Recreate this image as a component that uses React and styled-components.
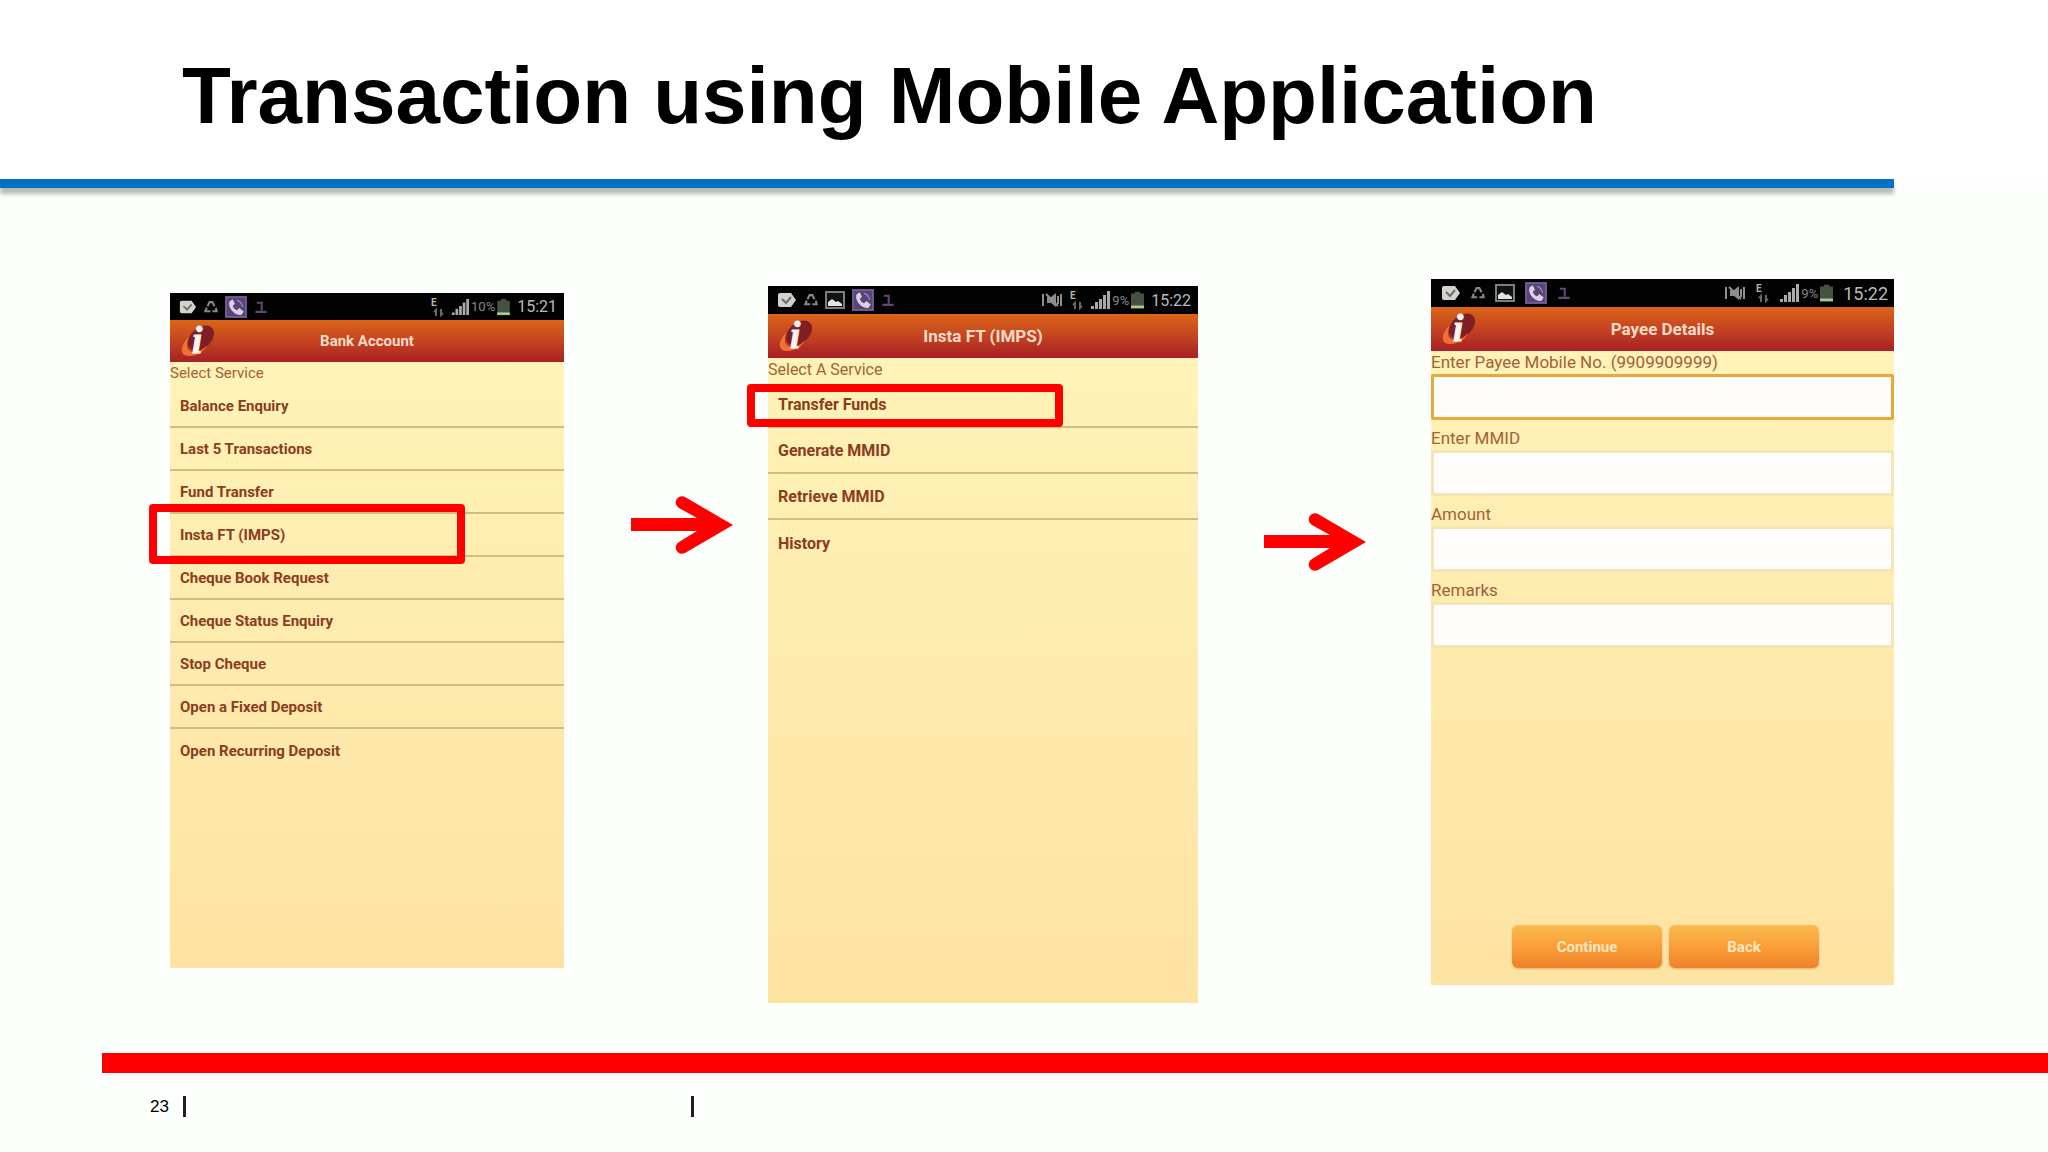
import React from "react";
import styled, { createGlobalStyle } from "styled-components";

const accountServices = [
  "Balance Enquiry",
  "Last 5 Transactions",
  "Fund Transfer",
  "Insta FT (IMPS)",
  "Cheque Book Request",
  "Cheque Status Enquiry",
  "Stop Cheque",
  "Open a Fixed Deposit",
  "Open Recurring Deposit",
];

const impsServices = [
  "Transfer Funds",
  "Generate MMID",
  "Retrieve MMID",
  "History",
];

const payeeFields = [
  { id: "mobile", label: "Enter Payee Mobile No. (9909909999)", active: true },
  { id: "mmid", label: "Enter MMID" },
  { id: "amount", label: "Amount" },
  { id: "remarks", label: "Remarks" },
];

function TagIcon({ size }) {
  return (
    <svg width={size} height={size} viewBox="0 0 20 20">
      <path d="M3 3h11l5 7-5 7H3q-2 0-2-2V5q0-2 2-2z" fill="#d2d4cd" />
      <path d="M5 9l4 4 5-6" fill="none" stroke="#6d7067" strokeWidth="2" />
    </svg>
  );
}

function RecycleIcon({ size }) {
  return (
    <svg width={size} height={size} viewBox="0 0 20 20">
      <path
        d="M5 9l3-6h4l3 6M17 11l1 5h-6M9 16H2l2-5"
        fill="none"
        stroke="#858984"
        strokeWidth="3"
      />
    </svg>
  );
}

function ImageIcon({ size }) {
  return (
    <svg width={size} height={size} viewBox="0 0 20 20">
      <rect x="1" y="2" width="18" height="16" fill="#10130f" stroke="#7b807b" strokeWidth="2" />
      <path d="M3 16v-4l4-3 4 3 2-1 4 3v2z" fill="#dce5df" />
    </svg>
  );
}

function CallIcon({ size }) {
  return (
    <svg width={size} height={size} viewBox="0 0 20 20">
      <rect x="0" y="0" width="20" height="20" fill="#594379" />
      <rect x="1" y="1" width="18" height="18" fill="none" stroke="#7f6c9c" />
      <path
        d="M4 5l3-2 2 4-2 2q1 3 4 4l2-2 4 3-2 3q-5 1-9-4-3-4-2-8z"
        fill="#dccfe6"
      />
      <path d="M11 4q4 1 5 6" fill="none" stroke="#a995bd" />
    </svg>
  );
}

function PersonIcon({ size }) {
  return (
    <svg width={size} height={size} viewBox="0 0 20 20">
      <path
        d="M4 4h7v11M2 17h16"
        fill="none"
        stroke="#664677"
        strokeWidth="3"
      />
    </svg>
  );
}

function MuteIcon({ size }) {
  return (
    <svg width={size} height={size} viewBox="0 0 20 20">
      <path d="M5 7h4l5-4v14l-5-4H5z" fill="#8b8d8b" />
      <path
        d="M1 4v12M19 4v12M16 6v8M4 4l12 12"
        fill="none"
        stroke="#8e908e"
        strokeWidth="2"
      />
    </svg>
  );
}

function DataIcon() {
  return (
    <svg width="14" height="20" viewBox="0 0 14 20">
      <text x="1" y="9" fill="#b4b6b4" fontSize="10" fontWeight="700" fontFamily="Roboto, sans-serif">
        E
      </text>
      <path
        d="M6 19v-6l-2 2M11 12v6l2-2"
        fill="none"
        stroke="#666966"
        strokeWidth="2"
      />
    </svg>
  );
}

function SignalIcon({ size }) {
  return (
    <svg width={size} height={size} viewBox="0 0 20 20">
      <path
        d="M1 19v-3h3v3zM5 19v-7h3v7zM9 19V9h3v10zM13 19V5h3v14zM17 19V1h3v18z"
        fill="#a9aba9"
      />
    </svg>
  );
}

function BatteryIcon({ size }) {
  return (
    <svg width="13" height={size} viewBox="3 0 14 20">
      <path d="M7 1h6v2h4v16H3V3h4z" fill="#45523f" />
      <path d="M3 16h14v3H3z" fill="#a9cb8d" />
    </svg>
  );
}

function BankLogo() {
  return (
    <Logo viewBox="0 0 36 32" role="img" aria-label="Bank logo">
      <ellipse cx="21" cy="13" rx="15" ry="10" transform="rotate(-42 21 13)" fill="#7e1f26" />
      <path
        d="M9 12C0 20-1 31 9 31c8 0 15-4 18-11-4 5-9 8-14 7-6-1-8-7-4-15z"
        fill="#ef7136"
      />
      <text
        x="12"
        y="28"
        fill="#fff3ee"
        stroke="#fff3ee"
        fontSize="37"
        fontWeight="700"
        fontStyle="italic"
        fontFamily="Liberation Serif, serif"
      >
        i
      </text>
    </Logo>
  );
}

function FlowArrow() {
  return (
    <svg width="102" height="58" viewBox="0 0 102 58" aria-hidden="true">
      <path
        d="M0 22h66L48 12a6 6 0 0 1 6-11l48 28-48 28a6 6 0 0 1-6-11l18-11H0z"
        fill="#ff0000"
      />
    </svg>
  );
}

function PhoneTop({ title, time, battery, large, wide, gallery, mute }) {
  const icon = large ? 20 : 18;
  return (
    <>
      <StatusBar $large={large} $wide={wide}>
        <StatusGroup $wide={wide}>
          <TagIcon size={icon} />
          <RecycleIcon size={14} />
          {gallery && <ImageIcon size={icon} />}
          <CallIcon size={22} />
          <PersonIcon size={14} />
        </StatusGroup>
        <StatusGroup $wide={wide}>
          {mute && <MuteIcon size={icon} />}
          <DataIcon />
          <Meter>
            <SignalIcon size={icon} />
            <Charge>{battery}</Charge>
            <BatteryIcon size={icon} />
          </Meter>
          <Clock $wide={wide}>{time}</Clock>
        </StatusGroup>
      </StatusBar>
      <AppBar $large={large}>
        <BankLogo />
        <AppTitle $large={large}>{title}</AppTitle>
      </AppBar>
    </>
  );
}

function ServiceList({ items, selected, large }) {
  return (
    <List>
      {items.map((item) => (
        <Service key={item} $large={large}>
          <ServiceLink href="#" $large={large}>
            {item}
          </ServiceLink>
          {item === selected && <Highlight $large={large} />}
        </Service>
      ))}
    </List>
  );
}

function App() {
  return (
    <Slide>
      <GlobalStyle />
      <Header>
        <Title>Transaction using Mobile Application</Title>
      </Header>
      <HeaderRule />
      <Flow>
        <Phone $top={14} $height={675}>
          <PhoneTop title="Bank Account" time="15:21" battery="10%" />
          <Prompt>Select Service</Prompt>
          <ServiceList items={accountServices} selected="Insta FT (IMPS)" />
        </Phone>
        <ArrowSlot $top={217} $indent={32}>
          <FlowArrow />
        </ArrowSlot>
        <Phone $top={7} $height={717}>
          <PhoneTop title="Insta FT (IMPS)" time="15:22" battery="9%" large gallery mute />
          <Prompt $large>Select A Service</Prompt>
          <ServiceList items={impsServices} selected="Transfer Funds" large />
        </Phone>
        <ArrowSlot $top={234} $indent={0}>
          <FlowArrow />
        </ArrowSlot>
        <Phone $top={0} $height={706}>
          <PhoneTop title="Payee Details" time="15:22" battery="9%" large wide gallery mute />
          <Form onSubmit={(e) => e.preventDefault()}>
            {payeeFields.map((field) => (
              <Field key={field.id}>
                <Label htmlFor={field.id}>{field.label}</Label>
                <Input id={field.id} type="text" $active={field.active} />
              </Field>
            ))}
            <Actions>
              <ActionButton type="submit">Continue</ActionButton>
              <ActionButton type="button">Back</ActionButton>
            </Actions>
          </Form>
        </Phone>
      </Flow>
      <Footer>
        <FooterBar />
        <FooterInfo>
          <PageNumber>23</PageNumber>
          <Divider />
          <FooterText />
          <Divider />
        </FooterInfo>
      </Footer>
    </Slide>
  );
}

const GlobalStyle = createGlobalStyle`
  * {
    box-sizing: border-box;
  }
  body {
    margin: 0;
    background-color: #fdfffc;
    font-family: Roboto, sans-serif;
  }
`;

const Slide = styled.main`
  min-height: 100vh;
  display: flex;
  flex-direction: column;
`;

const Header = styled.header`
  padding: 50px 0 37px 182px;
  background-color: white;
`;

const HeaderRule = styled.div`
  height: 9px;
  margin-right: 154px;
  background-color: #0070c4;
  box-shadow: 0 6px 4px rgba(0, 0, 0, 0.28);
`;

const Title = styled.h1`
  margin: 0;
  color: black;
  font-family: "Liberation Sans", Arial, sans-serif;
  font-size: 80px;
  line-height: 92px;
  font-weight: bold;
`;

const Flow = styled.section`
  display: grid;
  grid-template-columns: 394fr 204fr 430fr 233fr 463fr;
  align-items: start;
  padding: 91px 154px 0 170px;
`;

const Phone = styled.article`
  margin-top: ${({ $top }) => $top}px;
  min-height: ${({ $height }) => $height}px;
  display: flex;
  flex-direction: column;
  background: linear-gradient(#fff5b9, #feebae 50%, #fde3a2);
`;

const ArrowSlot = styled.div`
  display: flex;
  justify-content: center;
  padding-top: ${({ $top }) => $top}px;
  padding-left: ${({ $indent }) => $indent}px;
`;

const StatusBar = styled.div`
  height: ${({ $large }) => ($large ? 28 : 27)}px;
  padding: ${({ $wide }) => ($wide ? "0 6px 0 10px" : "0 7px 0 9px")};
  display: flex;
  align-items: center;
  justify-content: space-between;
  background-color: #020202;
`;

const StatusGroup = styled.div`
  display: flex;
  align-items: center;
  gap: ${({ $wide }) => ($wide ? 10 : 7)}px;
  svg {
    display: block;
  }
`;

const Meter = styled.div`
  display: flex;
  align-items: center;
  gap: 2px;
`;

const Charge = styled.span`
  color: #858885;
  font-size: 13px;
`;

const Clock = styled.span`
  color: #b9bbb9;
  font-size: ${({ $wide }) => ($wide ? 18 : 16)}px;
`;

const AppBar = styled.div`
  height: ${({ $large }) => ($large ? 44 : 42)}px;
  padding: 0 10px;
  display: grid;
  grid-template-columns: 36px 1fr 36px;
  align-items: center;
  background: linear-gradient(#db6518, #c44420 50%, #a81f25);
`;

const Logo = styled.svg`
  width: 36px;
  height: 32px;
  overflow: visible;
`;

const AppTitle = styled.h2`
  margin: 0;
  color: #fbdcc8;
  text-align: center;
  font-size: ${({ $large }) => ($large ? 17 : 15)}px;
  font-weight: 700;
`;

const Prompt = styled.p`
  margin: 0;
  color: #a4603b;
  font-size: ${({ $large }) => ($large ? 16 : 15)}px;
  line-height: ${({ $large }) => ($large ? 24 : 23)}px;
`;

const List = styled.ul`
  margin: 0;
  padding: 0;
  list-style: none;
`;

const Service = styled.li`
  position: relative;
  height: ${({ $large }) => ($large ? 46 : 43)}px;
  border-bottom: 2px solid #d0bd83;
  &:last-child {
    border-bottom: none;
  }
`;

const ServiceLink = styled.a`
  height: 100%;
  padding-left: 10px;
  display: flex;
  align-items: center;
  color: #8c3c20;
  font-size: ${({ $large }) => ($large ? 16 : 15)}px;
  font-weight: 700;
  text-decoration: none;
`;

const Highlight = styled.span`
  position: absolute;
  top: ${({ $large }) => ($large ? 2 : -10)}px;
  left: -21px;
  width: 316px;
  height: ${({ $large }) => ($large ? 43 : 60)}px;
  border: 8px solid #ff0000;
  border-radius: 4px;
  pointer-events: none;
`;

const Form = styled.form`
  flex: 1;
  display: flex;
  flex-direction: column;
`;

const Field = styled.div`
  height: 76px;
  display: flex;
  flex-direction: column;
`;

const Label = styled.label`
  color: #a4603b;
  font-size: 17px;
  line-height: 23px;
`;

const Input = styled.input`
  width: 100%;
  height: 46px;
  padding: 0 10px;
  background-color: #fffefd;
  background-clip: padding-box;
  border: 3px solid ${({ $active }) => ($active ? "#eda638" : "#f6e5b4")};
  border-radius: 2px;
  outline: none;
  font-size: 17px;
`;

const Actions = styled.div`
  margin-top: auto;
  padding: 0 0 17px 6px;
  display: flex;
  justify-content: center;
  gap: 7px;
`;

const ActionButton = styled.button`
  width: 150px;
  height: 43px;
  border: none;
  border-radius: 6px;
  color: #ffe6bd;
  background: linear-gradient(#f9bd50, #f99f38 50%, #ef8129);
  box-shadow: 0 1px 2px #e7b066;
  font-family: inherit;
  font-size: 15px;
  font-weight: 700;
`;

const Footer = styled.footer`
  margin-top: 50px;
`;

const FooterBar = styled.div`
  height: 20px;
  margin-left: 102px;
  background-color: #ff0000;
`;

const FooterInfo = styled.div`
  padding: 23px 0 0 150px;
  display: flex;
  align-items: center;
`;

const PageNumber = styled.span`
  width: 33px;
  font-family: "Liberation Sans", Arial, sans-serif;
  font-size: 17px;
  line-height: 21px;
`;

const Divider = styled.span`
  width: 3px;
  height: 21px;
  background-color: #202020;
`;

const FooterText = styled.span`
  width: 505px;
`;

export default App;
